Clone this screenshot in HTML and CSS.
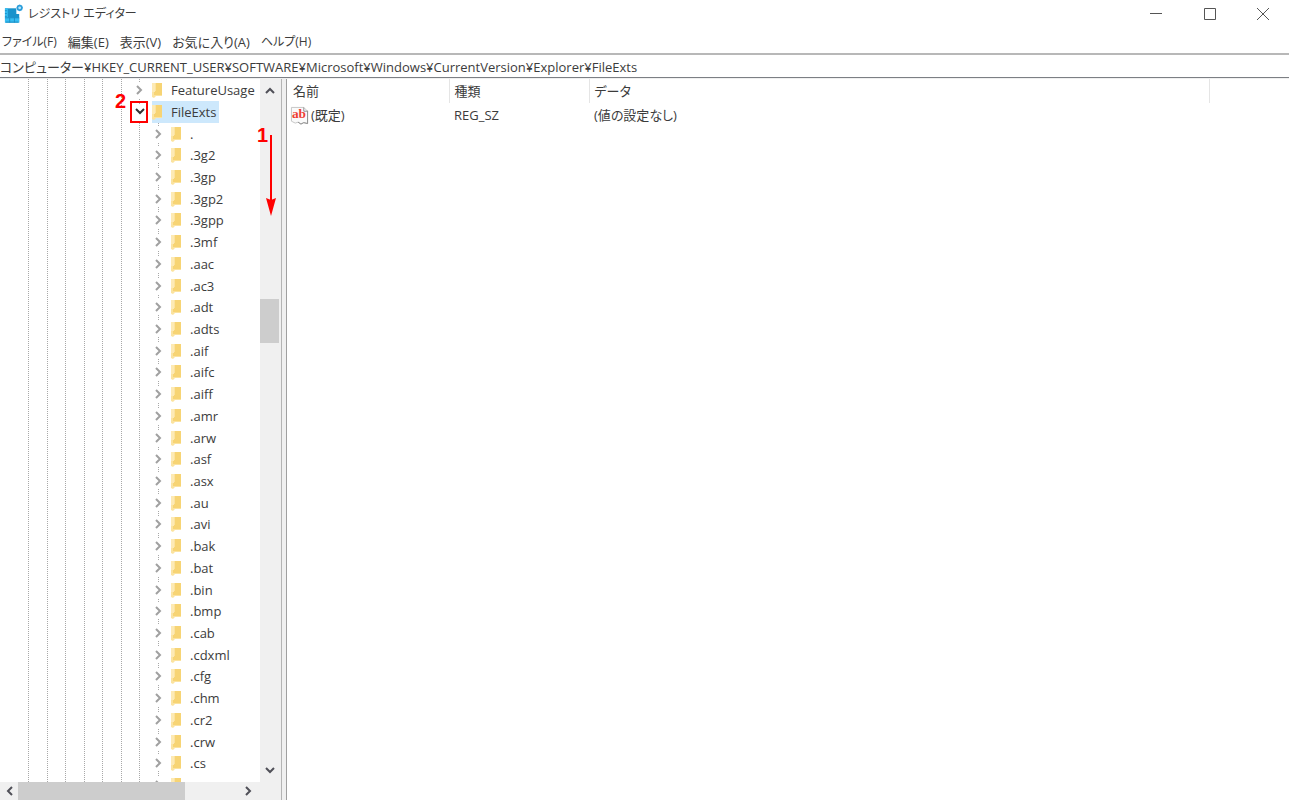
FILE: index.html
```html
<!DOCTYPE html>
<html lang="ja">
<head>
  <meta charset="UTF-8">
  <meta name="viewport" content="width=device-width, initial-scale=1.0">
  <title>レジストリ エディター</title>
  <link rel="stylesheet" href="styles.css">
</head>
<body>
  <header class="titlebar">
    <svg class="app-icon" viewBox="0 0 20 20">
      <rect x="1" y="4" width="15" height="15" fill="#1993cc"/>
      <path d="M1 4h3v10H1zM1 14h15v5H1z" fill="#35bdf2"/>
      <path d="M11 12v7M6 14v5M1 14h15" stroke="#1d8fc6" fill="none"/>
      <path d="M1 6.500h2M1 9.500h2M1 12.500h2M2 18.500h13" stroke="#1d8fc6" fill="none"/>
      <path d="M13 3h7v7h-7z" fill="#fff"/>
      <path d="M16.500 0l2.500 1 1 2.500-1 2.500-2.500 1-2.500-1-1-2.500 1-2.500z" fill="#2a9ddb"/>
      <circle cx="16.500" cy="3.500" r="1.500" fill="#b8e6fa"/>
    </svg>
    <h1>レジストリ エディター</h1>
    <div class="window-buttons">
      <button type="button" aria-label="最小化"><svg viewBox="0 0 14 14"><path d="M1 6.500h12"/></svg></button>
      <button type="button" aria-label="最大化"><svg viewBox="0 0 14 14"><path d="M1.500 1.500h11v11h-11z"/></svg></button>
      <button type="button" aria-label="閉じる"><svg viewBox="0 0 14 14"><path d="M1 1l12 12M13 1L1 13"/></svg></button>
    </div>
  </header>
  <nav class="menubar">
    <button type="button" class="kana">ファイル(F)</button>
    <button type="button">編集(E)</button>
    <button type="button">表示(V)</button>
    <button type="button">お気に入り(A)</button>
    <button type="button" class="kana">ヘルプ(H)</button>
  </nav>
  <input class="address" type="text" aria-label="アドレス" value="コンピューター¥HKEY_CURRENT_USER¥SOFTWARE¥Microsoft¥Windows¥CurrentVersion¥Explorer¥FileExts">

  <svg class="defs">
    <symbol id="folder" viewBox="0 0 12 16">
      <path d="M1 1h10v13H5l-2 2-2-1z" fill="#fbe3a0"/>
      <path d="M5 1h6v12H3V9h2z" fill="#f7d474"/>
      <path d="M1 1h3v9H1z" fill="#fdeab5"/>
    </symbol>
    <symbol id="chevron" viewBox="0 0 10 14">
      <path d="M2 3l4 4-4 4" fill="none" stroke="currentColor" stroke-width="2"/>
    </symbol>
  </svg>

  <main class="panes">
    <section class="tree-pane">
      <div class="tree-view">
        <svg class="guides">
          <path d="M28.500 0v800M47.500 0v800M65.500 0v800M84.500 0v800M102.500 0v800M121.500 0v800M139.500 0v800M158.500 44v800"/>
        </svg>
        <ul class="tree" id="tree">
          <li class="parent"><button type="button" aria-label="展開"><svg><use href="#chevron"/></svg></button><svg class="folder"><use href="#folder"/></svg><span>FeatureUsage</span></li>
          <li class="parent selected"><button type="button" aria-label="折りたたむ"><svg><use href="#chevron"/></svg></button><svg class="folder"><use href="#folder"/></svg><span>FileExts</span></li>
        </ul>
      </div>
      <div class="scroll-y">
        <button type="button" aria-label="上へ"><svg class="up"><use href="#chevron"/></svg></button>
        <div class="thumb"></div>
        <button type="button" aria-label="下へ"><svg class="down"><use href="#chevron"/></svg></button>
      </div>
      <div class="scroll-x">
        <button type="button" aria-label="左へ"><svg class="left"><use href="#chevron"/></svg></button>
        <div class="thumb"></div>
        <button type="button" aria-label="右へ"><svg><use href="#chevron"/></svg></button>
      </div>
      <div class="mark-box"></div>
      <span class="mark mark-two">2</span>
      <span class="mark mark-one">1</span>
      <svg class="mark-arrow" viewBox="0 0 10 82"><path d="M5 0v66" stroke="#f00" stroke-width="2"/><path d="M0 63l5 2 5-2-5 18z" fill="#f00"/></svg>
    </section>
    <section class="list-pane">
      <table class="values">
        <thead>
          <tr><th class="col-name">名前</th><th class="col-type">種類</th><th class="col-data">データ</th><th></th></tr>
        </thead>
        <tbody>
          <tr>
            <td>
              <div class="value-name">
                <svg viewBox="0 0 20 20">
                  <path d="M1.500 1.500h13l4 4v13l-4-1-3 1.500-3-2-3 1-4-2z" fill="#fafafa" stroke="#c4c4c4"/>
                  <path d="M14.500 1.500v4h4M18.500 5v13.500l-4-1-3 1.500-3-2" fill="none" stroke="#8e8e8e"/>
                  <text x="2" y="13">ab</text>
                </svg>
                (既定)
              </div>
            </td>
            <td>REG_SZ</td>
            <td>(値の設定なし)</td>
            <td></td>
          </tr>
        </tbody>
      </table>
    </section>
  </main>
  <script>
    const keys = ['.', '.3g2', '.3gp', '.3gp2', '.3gpp', '.3mf', '.aac', '.ac3', '.adt', '.adts', '.aif',
      '.aifc', '.aiff', '.amr', '.arw', '.asf', '.asx', '.au', '.avi', '.bak', '.bat', '.bin', '.bmp',
      '.cab', '.cdxml', '.cfg', '.chm', '.cr2', '.crw', '.cs', ''];
    const tree = document.getElementById('tree');
    keys.forEach((key) => {
      const li = document.createElement('li');
      li.innerHTML = '<button type="button" aria-label="展開"><svg><use href="#chevron"/></svg></button>' +
        '<svg class="folder"><use href="#folder"/></svg><span>' + key + '</span>';
      tree.appendChild(li);
    });
  </script>
</body>
</html>
```
FILE: styles.css
```css
* {
  box-sizing: border-box;
}
body {
  margin: 0;
  height: 100vh;
  display: flex;
  flex-direction: column;
  overflow: hidden;
  background: #fff;
  color: #3c3c3c;
  font-family: "Open Sans", "Noto Sans CJK JP", sans-serif;
  font-size: 13px;
  line-height: 20px;
  font-feature-settings: "palt";
}
button {
  display: flex;
  align-items: center;
  justify-content: center;
  padding: 0;
  border: none;
  background: none;
  color: inherit;
  font: inherit;
  font-feature-settings: inherit;
}
.defs {
  position: absolute;
  width: 0;
  height: 0;
}

/* title and menu */
.titlebar {
  display: flex;
  align-items: center;
  height: 27px;
  padding-left: 4px;
}
.app-icon {
  width: 19px;
  height: 20px;
  margin-right: 5px;
}
h1 {
  margin: 0;
  font-size: 12px;
  font-weight: normal;
}
.window-buttons {
  display: flex;
  margin-left: auto;
}
.window-buttons button {
  width: 54px;
  height: 26px;
}
.window-buttons button:last-child {
  width: 52px;
}
.window-buttons svg {
  width: 14px;
  height: 14px;
  fill: none;
  stroke: #555;
}
.menubar {
  display: flex;
  align-items: center;
  gap: 11px;
  height: 26px;
  padding: 4px 2px 0;
}
.menubar .kana {
  font-size: 12px;
}
.address {
  height: 25px;
  padding: 0;
  border: solid #b8b8b8;
  border-width: 2px 0 1px;
  border-bottom-color: #7c7f84;
  outline: none;
  color: inherit;
  font: inherit;
  font-feature-settings: inherit;
}

/* tree */
.panes {
  flex: 1;
  display: flex;
  min-height: 0;
  padding-top: 1px;
  background: #f0f0f0;
}
.tree-pane {
  position: relative;
  display: grid;
  grid-template: 1fr 18px / 1fr 19px;
  width: 282px;
  padding-right: 2px;
  border-right: 1px solid #b4b4b4;
}
.tree-view {
  position: relative;
  overflow: hidden;
  background: #fff;
}
.guides {
  position: absolute;
  width: 100%;
  height: 100%;
  fill: none;
  stroke: #a8a8a8;
  stroke-dasharray: 1 1;
}
.tree {
  position: relative;
  display: grid;
  grid-auto-rows: 22px 22px 21px 22px 22px 21px 22px;
  margin: 0;
  padding: 0;
  list-style: none;
}
.tree li {
  display: flex;
  align-items: center;
  padding-left: 153px;
}
.tree .parent {
  padding-left: 134px;
}
.tree button {
  flex: none;
  width: 12px;
  height: 16px;
  background: #fff;
  color: #a0a0a0;
}
.tree button svg,
.scroll-y svg,
.scroll-x svg {
  width: 10px;
  height: 14px;
}
.folder {
  flex: none;
  width: 12px;
  height: 16px;
  margin-left: 5px;
}
.tree span {
  padding: 0 4px 0 8px;
}
.selected {
  width: 219px;
  background: linear-gradient(to right, transparent 152px, #cde8fc 152px);
}
.tree .selected button {
  color: #333;
}
.selected button svg,
.down {
  transform: rotate(90deg);
}
.up {
  transform: rotate(-90deg);
}
.left {
  transform: rotate(180deg);
}

/* scroll bars */
.scroll-y,
.scroll-x {
  display: flex;
  background: #f0f0f0;
  color: #505058;
}
.scroll-y {
  flex-direction: column;
}
.scroll-y button {
  width: 19px;
  height: 22px;
}
.scroll-y .thumb {
  height: 44px;
  margin: 198px 0 auto;
  background: #cdcdcd;
}
.scroll-x button {
  width: 18px;
  height: 18px;
}
.scroll-x .thumb {
  width: 167px;
  margin-right: 55px;
  background: #cdcdcd;
}

/* step marks over the tree */
.mark {
  position: absolute;
  color: #f00;
  font: bold 20px/20px "Liberation Sans", sans-serif;
}
.mark-two {
  left: 115px;
  top: 12px;
}
.mark-one {
  left: 257px;
  top: 46px;
}
.mark-box {
  position: absolute;
  left: 130px;
  top: 22px;
  width: 18px;
  height: 22px;
  border: 2px solid #f00;
}
.mark-arrow {
  position: absolute;
  left: 266px;
  top: 56px;
  width: 10px;
  height: 82px;
}

/* values */
.list-pane {
  flex: 1;
  margin-left: 4px;
  border-left: 1px solid #a0a0a0;
  background: #fff;
}
.values {
  width: 100%;
  border-collapse: collapse;
  table-layout: fixed;
}
.values th,
.values td {
  height: 24px;
  padding: 0 5px;
  font-weight: normal;
  text-align: left;
}
.values th {
  border-right: 1px solid #e5e5e5;
}
.values th:last-child {
  width: 80px;
  border-right: none;
}
.values .col-name {
  width: 162px;
  padding-left: 6px;
}
.values .col-type {
  width: 140px;
}
.value-name {
  display: flex;
  align-items: center;
  gap: 2px;
}
.value-name svg {
  width: 19px;
  height: 19px;
  margin-left: -2px;
}
.value-name text {
  fill: #ee4035;
  font: bold 14px "Liberation Serif", serif;
}
```
